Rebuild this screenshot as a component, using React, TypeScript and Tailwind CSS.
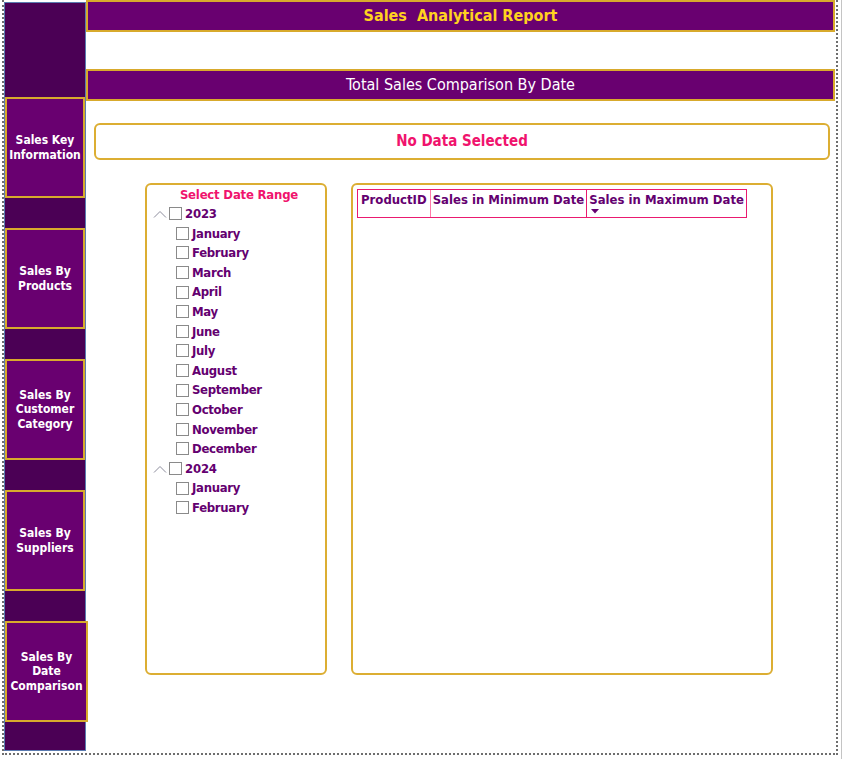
const NAV = [
  { label: 'Sales Key Information', wide: false },
  { label: 'Sales By Products', wide: false },
  { label: 'Sales By Customer Category', wide: false },
  { label: 'Sales By Suppliers', wide: false },
  { label: 'Sales By Date Comparison', wide: true },
]

const YEARS = [
  {
    year: '2023',
    months: ['January', 'February', 'March', 'April', 'May', 'June', 'July', 'August', 'September', 'October', 'November', 'December'],
  },
  { year: '2024', months: ['January', 'February'] },
]

const font = "font-['Tahoma','DejaVu_Sans_Condensed','DejaVu_Sans',sans-serif]"

function Box() {
  return <span className="w-[13px] h-[13px] border border-[#8a8a8a] bg-white shrink-0" />
}

function Chevron() {
  return (
    <svg width="14" height="8" viewBox="0 0 14 8" className="shrink-0">
      <path d="M1 7.5 L7 1.5 L13 7.5" fill="none" stroke="#8c8c9c" strokeWidth="1" />
    </svg>
  )
}

export default function App() {
  return (
    <div className={`relative w-[844px] h-[759px] bg-white ${font}`}>
      <div className="absolute right-[2px] top-0 bottom-0 w-px bg-[#c4c4c4]" />
      <div className="ml-[2px] w-[836px] h-[755px] border-2 border-t-0 border-dotted border-[#6e6e6e] flex">
        {/* sidebar */}
        <div className="w-[82px] mt-[2px] h-[749px] bg-[#4b0055] border border-[#5a7bb0] flex flex-col">
          <div className="h-[94px]" />
          {NAV.map((n, i) => (
            <div key={n.label} className="flex flex-col">
              <div
                className={`h-[101px] ${n.wide ? 'w-[83px]' : 'w-[80px]'} bg-[#690070] border-2 border-[#d8aa2c] flex items-center justify-center text-center text-white font-bold text-[12px] leading-[14.5px] px-[2px]`}
              >
                {n.label}
              </div>
              {i < NAV.length - 1 && <div className="h-[30px]" />}
            </div>
          ))}
        </div>

        {/* main */}
        <div className="flex-1 flex flex-col">
          <div className="h-[32px] mr-[1px] bg-[#690070] border-2 border-[#d8aa2c] flex items-center justify-center text-[#ffd21f] font-bold text-[16px] whitespace-pre">
            Sales  Analytical Report
          </div>
          <div className="mt-[37px] h-[32px] mr-[1px] bg-[#690070] border-2 border-[#d8aa2c] flex items-center justify-center text-white text-[16px]">
            Total Sales Comparison By Date
          </div>

          <div className="mt-[22px] ml-[8px] mr-[6px] h-[37px] rounded-[6px] border-2 border-[#dcae33] flex items-center justify-center text-[#f0136d] font-bold text-[15px]">
            No Data Selected
          </div>

          <div className="mt-[23px] ml-[59px] flex gap-[24px]">
            {/* date range */}
            <div className="w-[182px] h-[492px] rounded-[6px] border-2 border-[#dcae33] pt-[1px]">
              <div className="text-center text-[#f0136d] font-bold text-[13px] leading-[18px] tracking-[-0.2px] pl-[6px]">Select Date Range</div>
              <div className="flex flex-col">
                {YEARS.map((y) => (
                  <div key={y.year} className="flex flex-col">
                    <div className="h-[19.6px] flex items-center pl-[6px] gap-[2px]">
                      <Chevron />
                      <Box />
                      <span className="ml-[1px] text-[#640070] font-bold text-[13px] tracking-[-0.2px]">{y.year}</span>
                    </div>
                    {y.months.map((m) => (
                      <div key={m} className="h-[19.6px] flex items-center pl-[29px] gap-[3px]">
                        <Box />
                        <span className="text-[#640070] font-bold text-[13px] tracking-[-0.3px]">{m}</span>
                      </div>
                    ))}
                  </div>
                ))}
              </div>
            </div>

            {/* table */}
            <div className="w-[422px] h-[492px] rounded-[6px] border-2 border-[#dcae33] pl-[4px] pt-[4px]">
              <div className="flex w-fit border border-[#ea1a70] text-[#640070] font-bold text-[13px]">
                <div className="h-[27px] px-[3px] border-r border-[#ff7aa8]">ProductID</div>
                <div className="h-[27px] px-[2px] border-r border-[#ea1a70]">Sales in Minimum Date</div>
                <div className="relative h-[27px] px-[2px]">
                  Sales in Maximum Date
                  <svg width="8" height="5" viewBox="0 0 8 5" className="absolute left-[4px] top-[19px]">
                    <path d="M0 0 L8 0 L4 4.5 Z" fill="#640070" />
                  </svg>
                </div>
              </div>
            </div>
          </div>
        </div>
      </div>
    </div>
  )
}
